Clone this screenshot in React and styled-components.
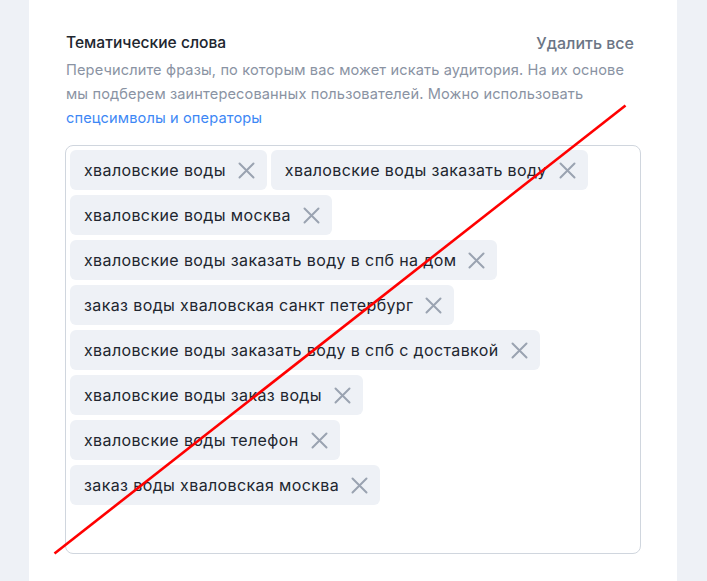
import React from 'react'
import styled, { createGlobalStyle } from 'styled-components'

const GlobalStyle = createGlobalStyle`
  html, body {
    margin: 0;
    padding: 0;
    background: #eef1f6;
    font-family: Inter, "Noto Sans", "Liberation Sans", sans-serif;
  }
`

const Page = styled.div`
  position: relative;
  height: 581px;
  padding: 0 30px 0 29px;
  overflow: hidden;
`

const Card = styled.section`
  background: #fff;
  height: 100%;
  box-sizing: border-box;
  padding: 31px 36px 0 36px;
`

const Header = styled.div`
  display: flex;
  justify-content: space-between;
  align-items: center;
  width: 576px;
  padding-right: 7px;
  box-sizing: border-box;
  margin-bottom: 3px;
`

const Title = styled.h2`
  margin: 0;
  font-size: 15.6px;
  line-height: 24px;
  font-weight: 500;
  color: #21262f;
  padding-left: 1px;
`

const ClearAll = styled.button`
  border: 0;
  background: none;
  padding: 0;
  font: inherit;
  font-size: 16px;
  line-height: 24px;
  font-weight: 500;
  color: #6b7585;
  cursor: pointer;
`

const Hint = styled.p`
  margin: 0;
  width: 568px;
  padding-left: 1px;
  font-size: 14.6px;
  letter-spacing: 0.12px;
  line-height: 24px;
  color: #8a93a3;
`

const Link = styled.a`
  color: #3d87f5;
  text-decoration: none;
`

const TagBox = styled.div`
  margin-top: 15px;
  width: 576px;
  height: 409px;
  box-sizing: border-box;
  border: 1px solid #d0d6de;
  border-radius: 8px;
  padding: 4px 8px 4px 4px;
  display: flex;
  flex-wrap: wrap;
  align-content: flex-start;
  gap: 5px 4px;
`

const Tag = styled.span`
  display: inline-flex;
  align-items: center;
  height: 40px;
  padding: 0 12px 0 14px;
  border-radius: 6px;
  background: #eef1f6;
  color: #21262f;
  font-size: 16px;
  letter-spacing: 0.38px;
  gap: 12px;
`

const Remove = styled.svg`
  width: 17px;
  height: 17px;
  flex: none;
`

const Strike = styled.svg`
  position: absolute;
  inset: 0;
  pointer-events: none;
`

const words = [
  'хваловские воды',
  'хваловские воды заказать воду',
  'хваловские воды москва',
  'хваловские воды заказать воду в спб на дом',
  'заказ воды хваловская санкт петербург',
  'хваловские воды заказать воду в спб с доставкой',
  'хваловские воды заказ воды',
  'хваловские воды телефон',
  'заказ воды хваловская москва',
]

const CloseIcon = () => (
  <Remove viewBox="0 0 17 17">
    <path d="M1.5 1.5 L15.5 15.5 M15.5 1.5 L1.5 15.5" stroke="#9aa3b1" strokeWidth="2" strokeLinecap="round" />
  </Remove>
)

const App = () => (
  <Page>
    <GlobalStyle />
    <Card>
      <Header>
        <Title>Тематические слова</Title>
        <ClearAll>Удалить все</ClearAll>
      </Header>
      <Hint>
        Перечислите фразы, по которым вас может искать аудитория. На их основе мы подберем
        заинтересованных пользователей. Можно использовать <Link href="#">спецсимволы и операторы</Link>
      </Hint>
      <TagBox>
        {words.map((w) => (
          <Tag key={w}>
            {w}
            <CloseIcon />
          </Tag>
        ))}
      </TagBox>
    </Card>
    <Strike width="707" height="581">
      <line x1="625.5" y1="105.5" x2="54.5" y2="553.5" stroke="#ff0000" strokeWidth="2.6" />
    </Strike>
  </Page>
)

export default App
